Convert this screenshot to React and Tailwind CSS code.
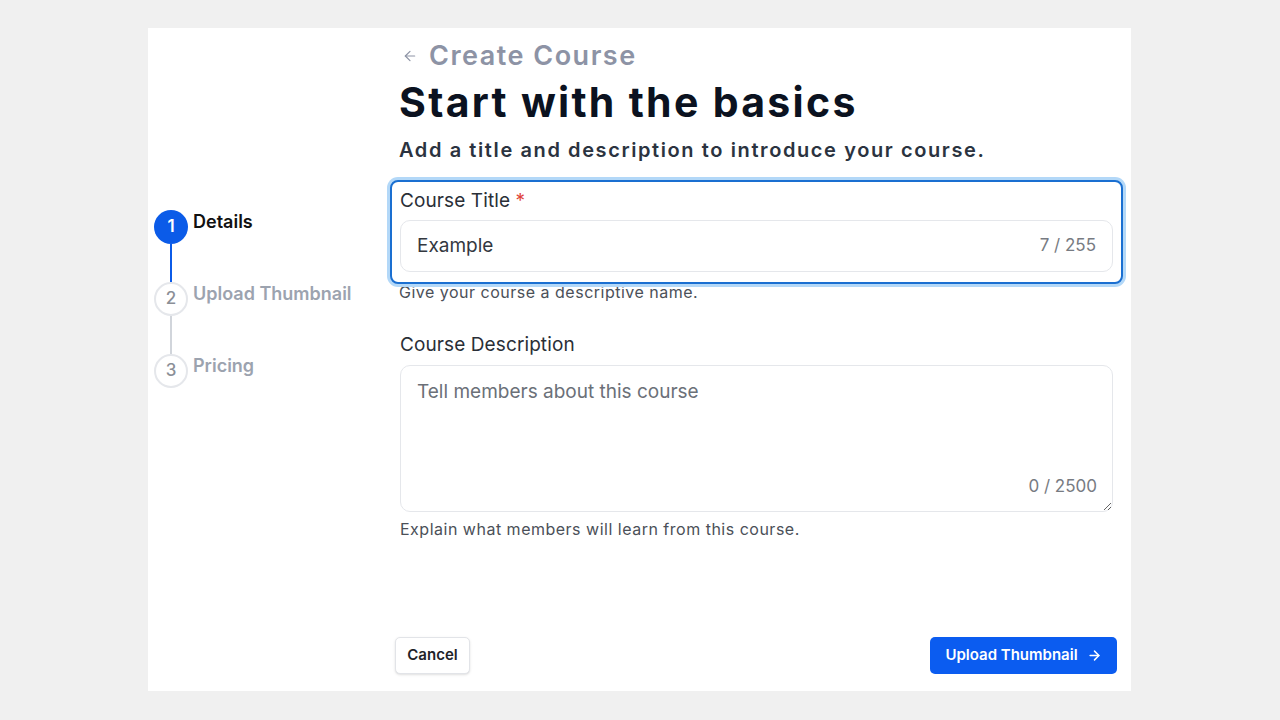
import React from 'react';
import { ArrowLeft, ArrowRight } from 'lucide-react';

const steps = [
  { n: 1, label: 'Details', active: true },
  { n: 2, label: 'Upload Thumbnail', active: false },
  { n: 3, label: 'Pricing', active: false },
];

const Stepper = () => (
  <div className="w-[242px] shrink-0 pl-[6px] pt-[182px]">
    {steps.map((step, idx) => (
      <div key={step.n} className="flex items-start gap-[5px]">
        <div className="flex flex-col items-center w-[34px]">
          {step.active ? (
            <div className="w-[34px] h-[34px] rounded-full bg-[#0b5be8] text-white flex items-center justify-center text-[17px] font-semibold">
              {step.n}
            </div>
          ) : (
            <div className="w-[34px] h-[34px] rounded-full bg-white border-2 border-[#e5e7eb] text-[#8b8f97] flex items-center justify-center text-[17px] font-medium">
              {step.n}
            </div>
          )}
          {idx < steps.length - 1 && (
            <div className={`w-[2px] h-[38px] ${step.active ? 'bg-[#0b5be8]' : 'bg-[#d1d5db]'}`}></div>
          )}
        </div>
        <span
          className={`text-[18px] leading-6 font-semibold ${step.active ? 'text-[#111111]' : 'text-[#9ca3af]'}`}
        >
          {step.label}
        </span>
      </div>
    ))}
  </div>
);

export default function App() {
  return (
    <div className="w-full h-[720px] bg-[#f0f0f0] pt-[28px] pl-[148px]" style={{ fontFamily: 'Inter, "Liberation Sans", sans-serif' }}>
      <div className="w-[983px] h-[663px] bg-white flex">
        <Stepper />

        <div className="w-[733px] flex flex-col pt-[12px] pb-[17px]">
          {/* Header */}
          <div className="pl-[9px]">
            <div className="flex items-center gap-[11px] text-[#8d93a5]">
              <ArrowLeft size={16} strokeWidth={1.8} className="ml-[3px]" />
              <span className="text-[27px] leading-8 font-semibold tracking-[1.5px]">Create Course</span>
            </div>
            <h1 className="mt-[6px] text-[41px] leading-[48px] font-bold text-[#0b1220] tracking-[2.3px]">
              Start with the basics
            </h1>
            <p className="mt-[10px] text-[20px] leading-7 font-semibold text-[#2b3340] tracking-[1.6px]">
              Add a title and description to introduce your course.
            </p>
          </div>

          {/* Course Title (focused) */}
          <div className="relative z-10 mt-[16px] rounded-[8px] border-2 border-[#1a6fd1] ring-[3px] ring-[#b3d8f8] bg-white px-[8px] pt-[7px] pb-[10px]">
            <label className="block text-[19px] leading-6 tracking-[0.1px] text-[#2a2f37]">
              Course Title <span className="text-[#e0443a]">*</span>
            </label>
            <div className="mt-[7px] h-[52px] rounded-[10px] border border-[#e5e7eb] flex items-center justify-between px-[16px]">
              <span className="text-[19px] text-[#33383f]">Example</span>
              <span className="text-[17px] text-[#777b82]">7 / 255</span>
            </div>
          </div>
          <p className="pl-[9px] text-[16px] leading-[16px] tracking-[0.5px] text-[#4b5058]">Give your course a descriptive name.</p>

          {/* Course Description */}
          <div className="px-[10px] mt-[33px]">
            <label className="block text-[19px] leading-6 tracking-[0.1px] text-[#2a2f37]">Course Description</label>
            <div className="relative mt-[8px]">
              <textarea
                className="block w-full h-[147px] rounded-[10px] border border-[#e5e7eb] px-[16px] pt-[12px] text-[19px] leading-[27px] text-[#33383f] placeholder:text-[#6b7078] outline-none resize-y"
                placeholder="Tell members about this course"
              ></textarea>
              <span className="absolute right-[16px] bottom-[13px] text-[17px] text-[#777b82]">0 / 2500</span>
            </div>
            <p className="mt-[7px] text-[16px] leading-5 tracking-[0.5px] text-[#4b5058]">Explain what members will learn from this course.</p>
          </div>

          <div className="flex-1"></div>

          {/* Footer buttons */}
          <div className="flex items-center justify-between pl-[5px] pr-[6px]">
            <button className="h-[37px] w-[75px] rounded-[5px] border border-[#e2e4e8] bg-white shadow-sm text-[15px] font-semibold text-[#1f2329]">
              Cancel
            </button>
            <button className="h-[37px] w-[187px] rounded-[5px] bg-[#0b5cf0] text-white text-[15px] font-semibold flex items-center justify-center gap-[9px]">
              Upload Thumbnail
              <ArrowRight size={15} strokeWidth={2.4} />
            </button>
          </div>
        </div>
      </div>
    </div>
  );
}
